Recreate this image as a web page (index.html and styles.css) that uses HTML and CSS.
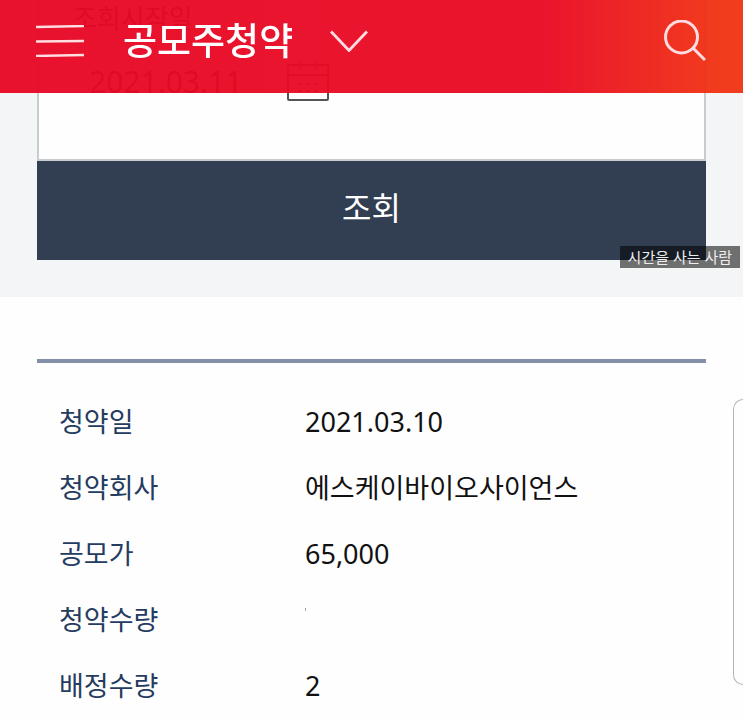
FILE: index.html
```html
<!DOCTYPE html>
<html lang="ko">
<head>
  <meta charset="UTF-8">
  <meta name="viewport" content="width=device-width, initial-scale=1.0">
  <title>공모주청약</title>
  <link rel="stylesheet" href="styles.css">
</head>
<body>
  <header class="topbar">
    <button class="icon-btn" type="button" aria-label="메뉴">
      <svg width="48" height="32" viewBox="0 0 48 32" fill="none" stroke="currentColor" stroke-width="2.4">
        <path d="M0 2L48 1M0 16.5L48 16M0 31L48 30"/>
      </svg>
    </button>
    <h1>공모주청약</h1>
    <button class="icon-btn" type="button" aria-label="메뉴 펼치기">
      <svg width="38" height="22" viewBox="0 0 38 22" fill="none" stroke="currentColor" stroke-width="2.8">
        <path d="M1 1.5L19 20.5L37 1.5"/>
      </svg>
    </button>
    <button class="icon-btn search-btn" type="button" aria-label="검색">
      <svg width="42" height="42" viewBox="0 0 42 42" fill="none" stroke="currentColor" stroke-width="3">
        <circle cx="17.5" cy="17" r="16"/>
        <path d="M29 28L41 40"/>
      </svg>
    </button>
  </header>

  <main>
    <form class="search-panel">
      <div class="field-box">
        <label for="startDate">조회시작일</label>
        <div class="date-row">
          <input type="text" id="startDate" value="2021.03.11">
          <button class="calendar-btn" type="button" aria-label="날짜 선택">
            <svg width="42" height="40" viewBox="0 0 42 40" fill="none" stroke="currentColor" stroke-width="2">
              <rect x="1" y="4" width="40" height="35" rx="1"/>
              <path d="M1 14H41M13 0V8M29 0V8"/>
              <path d="M11 23H31M11 30H31" stroke-dasharray="4 4"/>
            </svg>
          </button>
        </div>
      </div>
      <button class="submit-btn" type="button">조회</button>
      <span class="badge">시간을 사는 사람</span>
    </form>

    <section class="result">
      <table>
        <tbody>
          <tr><th scope="row">청약일</th><td>2021.03.10</td></tr>
          <tr><th scope="row">청약회사</th><td>에스케이바이오사이언스</td></tr>
          <tr><th scope="row">공모가</th><td>65,000</td></tr>
          <tr><th scope="row">청약수량</th><td><span class="speck"></span></td></tr>
          <tr><th scope="row">배정수량</th><td>2</td></tr>
        </tbody>
      </table>
      <aside class="side-handle"></aside>
    </section>
  </main>
</body>
</html>
```
FILE: styles.css
```css
* {
  box-sizing: border-box;
}

body {
  margin: 0;
  background: #fefefe;
  color: #111;
  font-family: "Noto Sans", "Noto Sans CJK KR", sans-serif;
}

button, input {
  font-family: inherit;
  border: none;
  padding: 0;
}

svg {
  display: block;
}

/* header stays over the scrolled form */
.topbar {
  position: fixed;
  top: 0;
  left: 0;
  right: 0;
  z-index: 2;
  display: flex;
  align-items: center;
  height: 93px;
  padding: 0 37px 12px 36px;
  color: #ffdde1;
  background: linear-gradient(90deg, rgba(232, 8, 38, 0.96), rgba(233, 12, 36, 0.96) 74%, rgba(241, 52, 20, 0.96) 97%);
}

.topbar h1 {
  margin: 0 37px 0 39px;
  color: #fff;
  font-size: 37px;
  font-weight: 500;
  line-height: 48px;
}

.icon-btn {
  color: inherit;
  background: none;
  cursor: pointer;
}

.search-btn {
  margin-left: auto;
}

.search-panel {
  position: relative;
  padding: 0 37px 37px;
  background: #f3f5f7;
}

.field-box {
  padding: 0 34px 57px;
  background: #fefefe;
  border: 2px solid #c8cccf;
  border-top: none;
}

.field-box label {
  display: block;
  color: #222;
  font-size: 26px;
  line-height: 36px;
}

.date-row {
  display: flex;
  align-items: center;
  gap: 16px;
  padding: 24px 16px 0;
}

.date-row input {
  width: 182px;
  height: 42px;
  color: #222;
  background: none;
  font-size: 30px;
}

.calendar-btn {
  color: #555;
  background: none;
}

.submit-btn {
  display: block;
  width: 100%;
  padding-bottom: 6px;
  color: #fff;
  background: #323e52;
  font-size: 32px;
  line-height: 93px;
  cursor: pointer;
}

.badge {
  position: absolute;
  right: 3px;
  bottom: 29px;
  padding: 0 8px;
  color: #eee;
  background: rgba(0, 0, 0, 0.55);
  font-size: 15px;
  line-height: 22px;
}

.result {
  position: relative;
  padding: 62px 37px 0;
}

.result table {
  width: 100%;
  border-top: 4px solid #8290a8;
  border-spacing: 0;
  padding-top: 26px;
  table-layout: fixed;
}

.result th, .result td {
  height: 66px;
  padding: 0;
  font-size: 27px;
  font-weight: 400;
  line-height: 36px;
  text-align: left;
}

.result th {
  width: 268px;
  padding-left: 22px;
  color: #253c60;
}

.speck {
  display: block;
  width: 1px;
  height: 3px;
  margin-bottom: 22px;
  background: #aaa;
}

/* edge of the drawer that is pulled in from the right */
.side-handle {
  position: absolute;
  top: 102px;
  right: 0;
  width: 10px;
  height: 286px;
  border: 1px solid #b5b5b5;
  border-right: none;
  border-radius: 12px 0 0 12px;
}
```
